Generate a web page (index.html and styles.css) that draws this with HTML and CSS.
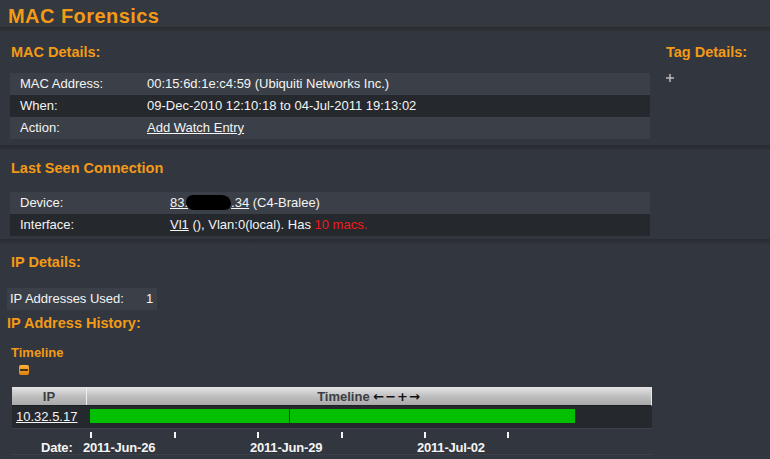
FILE: index.html
```html
<!DOCTYPE html>
<html>
<head>
<meta charset="utf-8">
<title>MAC Forensics</title>
<link rel="stylesheet" href="styles.css">
</head>
<body>
<div class="titlebar">MAC Forensics</div>
<div class="sep sep-title"></div>

<div class="section s1">
  <div class="main-col">
    <div class="h">MAC Details:</div>
    <div class="kvtable">
      <div class="kv light"><div class="k">MAC Address:</div><div class="v">00:15:6d:1e:c4:59 (Ubiquiti Networks Inc.)</div></div>
      <div class="kv dark"><div class="k">When:</div><div class="v">09-Dec-2010 12:10:18 to 04-Jul-2011 19:13:02</div></div>
      <div class="kv light"><div class="k">Action:</div><div class="v"><a class="lnk" href="#">Add Watch Entry</a></div></div>
    </div>
  </div>
  <div class="side-col">
    <div class="h">Tag Details:</div>
    <svg class="plus" width="8" height="8" viewBox="0 0 8 8">
      <rect x="3" y="0" width="2" height="8" fill="#9a9a9a"/>
      <rect x="0" y="3" width="8" height="2" fill="#9a9a9a"/>
      <rect x="3" y="3" width="2" height="2" fill="#b4b4b4"/>
    </svg>
  </div>
</div>
<div class="sep"></div>

<div class="section s2">
  <div class="h">Last Seen Connection</div>
  <div class="kvtable">
    <div class="kv light wide"><div class="k">Device:</div><div class="v"><a class="lnk" href="#">83.<span class="blob"></span>.34</a> (C4-Bralee)</div></div>
    <div class="kv dark wide"><div class="k">Interface:</div><div class="v"><a class="lnk" href="#">Vl1</a> (), Vlan:0(local). Has <span class="red">10 macs.</span></div></div>
  </div>
</div>
<div class="sep"></div>

<div class="section s3">
  <div class="h ind">IP Details:</div>
  <div class="ipused"><div class="ik">IP Addresses Used:</div><div class="iv">1</div></div>
  <div class="h hist">IP Address History:</div>
  <div class="h small ind">Timeline</div>
  <svg class="minus" width="10" height="10" viewBox="0 0 10 10">
    <defs>
      <linearGradient id="og" x1="0" y1="0" x2="0" y2="1">
        <stop offset="0" stop-color="#ffb23a"/>
        <stop offset="1" stop-color="#e07f08"/>
      </linearGradient>
    </defs>
    <rect x="0" y="0" width="10" height="10" rx="2" fill="url(#og)"/>
    <rect x="1" y="4" width="8" height="2" fill="#4a3418"/>
  </svg>
  <div class="tl">
    <div class="tl-head">
      <div class="th th-ip">IP</div>
      <div class="th th-tl">Timeline <span class="arr">←−+→</span></div>
    </div>
    <div class="tl-row">
      <div class="td-ip"><a class="lnk" href="#">10.32.5.17</a></div>
      <div class="td-bar">
        <div class="bar">
          <div class="seg" style="width:199px"></div>
          <div class="divline"></div>
          <div class="seg" style="width:285px"></div>
        </div>
      </div>
    </div>
    <div class="axis">
      <span class="tick" style="left:78px"></span>
      <span class="tick" style="left:162px"></span>
      <span class="tick" style="left:245px"></span>
      <span class="tick" style="left:329px"></span>
      <span class="tick" style="left:412px"></span>
      <span class="tick" style="left:495px"></span>
      <span class="alabel" style="left:29px">Date:</span>
      <span class="alabel" style="left:71px">2011-Jun-26</span>
      <span class="alabel" style="left:238px">2011-Jun-29</span>
      <span class="alabel" style="left:405px">2011-Jul-02</span>
    </div>
  </div>
</div>
</body>
</html>
```
FILE: styles.css
```css
* { box-sizing: border-box; }

html, body {
  margin: 0;
  padding: 0;
}

body {
  background: #32363e;
  font-family: "Liberation Sans", Arial, sans-serif;
  font-size: 13px;
  color: #f4f4f4;
  width: 770px;
  height: 459px;
  overflow: hidden;
}

.titlebar {
  height: 27px;
  background: #34383f;
  padding: 6px 0 0 8px;
  font-size: 20px;
  line-height: 21px;
  font-weight: bold;
  color: #f39a17;
  letter-spacing: 0.45px;
}

.sep {
  height: 5px;
  background: linear-gradient(#282b30, #2f333a);
}

.sep-title {
  height: 4px;
}

.h {
  font-size: 14.5px;
  line-height: 17px;
  font-weight: bold;
  color: #f39a17;
  margin-left: 1px;
}

.h.small {
  font-size: 13px;
  line-height: 16px;
}

/* Section 1 */
.s1 {
  display: flex;
  gap: 16px;
  height: 114px;
  padding: 13px 0 6px 10px;
}

.main-col {
  width: 640px;
}

.side-col {
  display: flex;
  flex-direction: column;
  align-items: flex-start;
}

.side-col .h {
  margin-left: 0;
}

.plus {
  display: block;
  margin-top: 13px;
}

.kvtable {
  margin-top: 12px;
  width: 640px;
}

.kv {
  display: flex;
  height: 22px;
  line-height: 22px;
}

.kv.light { background: #3b4048; }
.kv.dark { background: #25282d; }

.k {
  width: 137px;
  padding-left: 10px;
  flex: none;
}

.kv.wide .k { width: 160px; }

.lnk {
  color: #f4f4f4;
  text-decoration: underline;
}

.red { color: #ee1c1c; }

.blob {
  display: inline-block;
  width: 45px;
  height: 15px;
  margin-left: -2px;
  vertical-align: -3px;
  background: #000;
  border-radius: 8px 10px 7px 9px;
}

/* Section 2 */
.s2 {
  height: 89px;
  padding: 10px 0 3px 10px;
}

.s2 .kvtable {
  margin-top: 15px;
}

/* Section 3 */
.s3 {
  padding: 10px 0 0 7px;
}

.h.ind {
  margin-left: 4px;
}

.ipused {
  display: flex;
  width: 150px;
  height: 22px;
  line-height: 22px;
  margin-top: 17px;
  background: #3b4048;
}

.ik {
  width: 139px;
  padding-left: 3px;
}

.h.hist {
  margin-top: 5px;
  margin-left: 0;
}

.h.small.ind {
  margin-top: 13px;
}

.minus {
  display: block;
  margin: 4px 0 0 12px;
}

/* Timeline table */
.tl {
  width: 640px;
  margin: 12px 0 0 5px;
}

.tl-head {
  display: flex;
  height: 19px;
  background: linear-gradient(#e4e4e4, #bdbdbd 55%, #a9a9a9);
  border-right: 1px solid #e8e8e8;
  border-bottom: 1px solid #1c1e22;
}

.th {
  font-size: 13px;
  line-height: 16px;
  padding-top: 2px;
  font-weight: bold;
  color: #3b3e44;
  text-align: center;
}

.th-ip {
  width: 75px;
  border-right: 1px solid #eeeeee;
}

.th-tl {
  flex: 1;
}

.arr {
  font-family: "DejaVu Sans", sans-serif;
  font-size: 13px;
  color: #111;
  letter-spacing: 1px;
}

.tl-row {
  display: flex;
  height: 23px;
  background: #25282d;
  border-bottom: 1px solid #3c4149;
}

.td-ip {
  width: 75px;
  padding-left: 4px;
  line-height: 22px;
}

.td-bar {
  flex: 1;
  padding: 3px 0 0 3px;
}

.bar {
  display: flex;
  height: 14px;
}

.seg {
  height: 14px;
  background: #00c000;
}

.divline {
  width: 1px;
  height: 14px;
  background: #0d3a0d;
}

.axis {
  position: relative;
  height: 26px;
  border-bottom: 1px solid #3c4149;
}

.tick {
  position: absolute;
  top: 3px;
  width: 2px;
  height: 6px;
  background: #f4f4f4;
}

.alabel {
  position: absolute;
  top: 12px;
  font-size: 13px;
  line-height: 13px;
  font-weight: bold;
  color: #f4f4f4;
  letter-spacing: -0.2px;
  white-space: nowrap;
}
```
